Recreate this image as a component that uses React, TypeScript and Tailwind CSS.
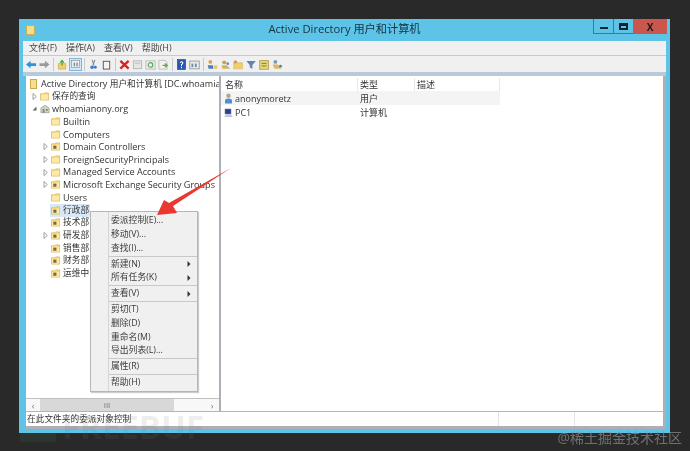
import React from "react";

const font = { fontFamily: '"Open Sans","Noto Sans CJK SC",sans-serif' };

function Folder({ mark }: { mark?: boolean }) {
  return (
    <svg width="10" height="9" viewBox="0 0 11 10" className="shrink-0">
      <path d="M0.5 2 H4 L5 1 H9.5 V9 H0.5 Z" fill="#f3d67e" stroke="#d9b25a" strokeWidth="0.8" />
      <rect x="1" y="3" width="8" height="5.5" fill="#fbe9a8" />
      {mark && <rect x="2.5" y="4" width="3.5" height="3.5" fill="#7d6a35" />}
    </svg>
  );
}

function Chevron({ open }: { open?: boolean }) {
  return (
    <svg width="5" height="7" viewBox="0 0 5 7" className="shrink-0">
      {open ? <path d="M4.5 1.5 V5.5 H0.5 Z" fill="#666" /> : <path d="M1 0.5 L4.3 3.5 L1 6.5 Z" fill="#fff" stroke="#888" strokeWidth="0.8" />}
    </svg>
  );
}

function TreeRow({ label, indent, chevron, open, icon, selected, cjk }: { label: string; indent: number; chevron?: boolean; open?: boolean; icon: React.ReactNode; selected?: boolean; cjk?: boolean }) {
  return (
    <div className="flex h-[12.65px] items-center whitespace-nowrap">
      <div style={{ width: indent }} className="flex shrink-0 justify-end pr-[2px]">
        {chevron && <Chevron open={open} />}
      </div>
      <div className={selected ? "flex h-[13px] items-center gap-[2px] bg-[#d9e8f7] pl-[1px] pr-[1px]" : "flex items-center gap-[2px] pl-[1px]"}>
        {icon}
        <span className={cjk ? "text-[8.7px]" : "text-[9.05px]"}>{label}</span>
      </div>
    </div>
  );
}

function Sep() {
  return <div className="my-[0.5px] ml-[18px] h-px bg-[#c8c8c8]" />;
}

function MenuItem({ label, arrow }: { label: string; arrow?: boolean }) {
  return (
    <div className="flex h-[13.8px] items-center justify-between pl-[20px] pr-[6px]">
      <span>{label}</span>
      {arrow && (
        <svg width="4" height="6" viewBox="0 0 4 6">
          <path d="M0.5 0 L3.5 3 L0.5 6 Z" fill="#333" />
        </svg>
      )}
    </div>
  );
}

function ToolSep() {
  return <div className="mx-[2px] h-[13px] w-px bg-[#c9c9c9]" />;
}

function Tool({ children, w = 15 }: { children: React.ReactNode; w?: number }) {
  return (
    <svg width="13" height="11" viewBox={`0 0 ${w} 12`} className="shrink-0">
      {children}
    </svg>
  );
}

const paperIcon = (
  <Tool w={13}>
    <rect x="2" y="2" width="9" height="8.5" fill="#e6e6e6" stroke="#b5b5b5" />
    <rect x="3.5" y="4" width="6" height="1.5" fill="#c8c8c8" />
  </Tool>
);

export default function App() {
  return (
    <div className="relative h-[451px] w-[690px] overflow-hidden bg-[#292929] pl-[19px] pt-[19px] text-[9px] text-[#333] blur-[0.35px]" style={font}>
      <div className="flex h-[414px] w-[651px] flex-col bg-[#5dc4e8]">
        {/* title bar */}
        <div className="relative flex h-[22px] shrink-0 items-center justify-center">
          <div className="absolute left-[7px] top-[6px] h-[10px] w-[9px] border border-[#c9b060] bg-[#f3e08f]" />
          <span className="mt-[-1px] text-[11.2px] text-[#14303f]">Active Directory 用户和计算机</span>
          <div className="absolute right-[3px] top-0 flex h-[15px]">
            <div className="flex w-[20px] items-center justify-center border-b border-l border-[#2f7f9f]">
              <div className="mt-[3px] h-[2px] w-[8px] bg-[#10242f]" />
            </div>
            <div className="flex w-[20px] items-center justify-center border-b border-l border-[#2f7f9f]">
              <div className="h-[7px] w-[9px] border-2 border-t-[3px] border-[#10242f]" />
            </div>
            <div className="flex w-[34px] items-center justify-center bg-[#c9574f] text-[10px] font-bold leading-none text-[#1b1b1b]">X</div>
          </div>
        </div>

        {/* menu + toolbar */}
        <div className="ml-[4px] mr-[4px] flex h-[15px] shrink-0 items-center gap-[9px] border-b border-[#c9c9c9] bg-[#f0f0f0] pl-[6px] text-[#444]">
          <span>文件(F)</span>
          <span>操作(A)</span>
          <span>查看(V)</span>
          <span>帮助(H)</span>
        </div>
        <div className="ml-[4px] mr-[4px] flex h-[16px] shrink-0 items-center bg-[#f0f0f0] pl-[2px]">
          <Tool w={14}>
            <path d="M1 6 L6 2 V4.5 H12 V7.5 H6 V10 Z" fill="#2b93d8" />
          </Tool>
          <Tool w={13}>
            <path d="M12 6 L7 2 V4.5 H1 V7.5 H7 V10 Z" fill="#9a9a9a" />
          </Tool>
          <ToolSep />
          <Tool w={13}>
            <path d="M2 5 H10 V11 H2 Z" fill="#f0cf6a" stroke="#c9a545" strokeWidth="0.7" />
            <path d="M6 7 V2 M4 4 L6 1.5 L8 4" stroke="#4aa63c" strokeWidth="1.3" fill="none" />
          </Tool>
          <div className="flex h-[13px] w-[13px] items-center justify-center border border-[#7fb4dc] bg-[#d6e6f3]">
            <svg width="9" height="8" viewBox="0 0 10 9">
              <rect x="0.5" y="0.5" width="9" height="8" fill="#eee" stroke="#888" strokeWidth="0.7" />
              <rect x="3" y="3" width="1.5" height="4" fill="#6b8aa5" />
              <rect x="6" y="3" width="1.5" height="4" fill="#6b8aa5" />
            </svg>
          </div>
          <ToolSep />
          <Tool w={13}>
            <path d="M8 1 L6 7 M5 1 L7 7" stroke="#8a8a8a" strokeWidth="1.2" />
            <circle cx="5" cy="9" r="2" fill="#3a7fc0" />
            <circle cx="8.5" cy="9" r="1.6" fill="#3a7fc0" />
          </Tool>
          <Tool w={13}>
            <rect x="3" y="2.5" width="7" height="8.5" fill="#f4f4f4" stroke="#555" />
          </Tool>
          <ToolSep />
          <Tool w={14}>
            <path d="M2.5 2 L11.5 10.5 M11.5 2 L2.5 10.5" stroke="#d8231c" strokeWidth="2.6" />
          </Tool>
          {paperIcon}
          <Tool w={14}>
            <rect x="2" y="2" width="10" height="9" fill="#eee" stroke="#bbb" />
            <circle cx="7" cy="6.5" r="2.5" fill="none" stroke="#57a957" strokeWidth="1.2" />
          </Tool>
          <Tool w={14}>
            <path d="M2 1.5 H9 L11 4 V11 H2 Z" fill="#f2f2f2" stroke="#bbb" />
            <path d="M6 7 H10 M8.5 5 L11 7 L8.5 9" stroke="#5fae3f" strokeWidth="1.4" fill="none" />
          </Tool>
          <ToolSep />
          <Tool w={14}>
            <rect x="2.5" y="0.5" width="9" height="11" fill="#2a55b5" stroke="#1c3b85" strokeWidth="0.6" />
            <path d="M5.5 4 Q7 2 8.5 4 Q8.5 5 7 6 V7.5 M7 8.5 V10" stroke="#fff" strokeWidth="1.1" fill="none" />
          </Tool>
          <Tool w={15}>
            <rect x="2" y="2" width="11" height="9" fill="#e8e8e8" stroke="#999" />
            <rect x="4" y="5" width="2" height="4" fill="#6c8aa5" />
            <rect x="8" y="5" width="2" height="4" fill="#6c8aa5" />
          </Tool>
          <ToolSep />
          <Tool w={15}>
            <circle cx="5" cy="3" r="2.2" fill="#d9a05a" />
            <path d="M2 7 H8 L8.5 11 H3 Z" fill="#4d7fb5" />
            <rect x="9" y="7" width="4" height="4" fill="#e9c768" />
          </Tool>
          <Tool w={15}>
            <circle cx="6" cy="3.5" r="2.2" fill="#c99a5c" />
            <path d="M3 7 H9 L13 11 H4 Z" fill="#d5b35c" />
            <circle cx="10" cy="5" r="1.6" fill="#6f88b5" />
          </Tool>
          <Tool w={15}>
            <path d="M2 3 H6 L7 4 H12 V11 H2 Z" fill="#f1cf6b" stroke="#d3ab4c" strokeWidth="0.6" />
            <circle cx="4" cy="3" r="1.8" fill="#c99a5c" />
          </Tool>
          <Tool w={15}>
            <path d="M1.5 2 H12.5 L8.5 6.5 V11 L5.5 9.5 V6.5 Z" fill="#5f86ad" />
          </Tool>
          <Tool w={15}>
            <rect x="2" y="1.5" width="10" height="10" fill="#eed57a" stroke="#b59b4b" />
            <rect x="4" y="4" width="6" height="1.3" fill="#5a9a5a" />
            <rect x="4" y="7" width="6" height="1.3" fill="#5a9a5a" />
          </Tool>
          <Tool w={15}>
            <circle cx="5" cy="3" r="2.2" fill="#7a99c0" />
            <path d="M2 6 H8 L12 11 H4 Z" fill="#d8b860" />
            <circle cx="11" cy="8" r="1.6" fill="#4f7fb5" />
          </Tool>
        </div>

        {/* strip above the panes */}
        <div className="ml-[4px] mr-[4px] h-[4px] shrink-0 bg-[#b9c9da]" />

        {/* panes and status bar, with a grey edge on the right and below */}
        <div className="ml-[7px] mr-[4px] mb-[4px] flex min-h-0 flex-1 flex-col bg-[#aeaeb6] pb-[3px] pr-[3px]">
          <div className="flex min-h-0 flex-1 gap-[2px]">
            <div className="flex w-[193px] shrink-0 flex-col overflow-hidden bg-white">
              <div className="flex-1 overflow-hidden pt-[1.4px]">
                <div className="flex h-[12.65px] items-center gap-[3px] overflow-hidden whitespace-nowrap pl-[4px]">
                  <div className="h-[10px] w-[7px] shrink-0 border border-[#c9a850] bg-[#f3e08f]" />
                  <span className="ml-px text-[9.05px]">
                    Active Directory <span className="text-[8.7px]">用户和计算机</span> [DC.whoamia
                  </span>
                </div>
                <TreeRow label="保存的查询" cjk indent={13} chevron icon={<Folder />} />
                <TreeRow
                  label="whoamianony.org"
                  indent={13}
                  chevron
                  open
                  icon={
                    <svg width="10" height="10" viewBox="0 0 11 10" className="shrink-0">
                      <path d="M1 9 V4 L5.5 1 L10 4 V9 Z" fill="#d5d5c5" stroke="#8c8c80" strokeWidth="0.7" />
                      <rect x="3" y="5" width="2" height="4" fill="#7a8a7a" />
                      <rect x="6.5" y="5" width="2" height="2" fill="#7a8a7a" />
                    </svg>
                  }
                />
                <TreeRow label="Builtin" indent={24} icon={<Folder />} />
                <TreeRow label="Computers" indent={24} icon={<Folder />} />
                <TreeRow label="Domain Controllers" indent={24} chevron icon={<Folder mark />} />
                <TreeRow label="ForeignSecurityPrincipals" indent={24} chevron icon={<Folder />} />
                <TreeRow label="Managed Service Accounts" indent={24} chevron icon={<Folder />} />
                <TreeRow label="Microsoft Exchange Security Groups" indent={24} chevron icon={<Folder mark />} />
                <TreeRow label="Users" indent={24} icon={<Folder />} />
                <TreeRow label="行政部" cjk indent={24} icon={<Folder mark />} selected />
                <TreeRow label="技术部" cjk indent={24} icon={<Folder mark />} />
                <TreeRow label="研发部" cjk indent={24} chevron icon={<Folder mark />} />
                <TreeRow label="销售部" cjk indent={24} icon={<Folder mark />} />
                <TreeRow label="财务部" cjk indent={24} icon={<Folder mark />} />
                <TreeRow label="运维中" cjk indent={24} icon={<Folder mark />} />
              </div>
              {/* horizontal scrollbar */}
              <div className="flex h-[13px] shrink-0 items-center border-t border-[#c0c0c0] bg-[#f8f8f8] text-[#777]">
                <div className="flex w-[14px] justify-center text-[9px] leading-none">‹</div>
                <div className="flex h-full w-[134px] items-center justify-center bg-[#d8d8d8] text-[8px] leading-none">III</div>
                <div className="flex-1" />
                <div className="flex w-[14px] justify-center text-[9px] leading-none">›</div>
              </div>
            </div>

            <div className="flex flex-1 flex-col bg-white">
              <div className="flex h-[15px] shrink-0 pt-[2px]">
                <div className="flex w-[137px] items-center border-r border-[#e8e8e8] pl-[4px]">名称</div>
                <div className="flex w-[57px] items-center border-r border-[#e8e8e8] pl-[2px]">类型</div>
                <div className="flex w-[85px] items-center border-r border-[#e8e8e8] pl-[2px]">描述</div>
              </div>
              <div className="flex h-[14px] w-[279px] items-center bg-[#f4f4f4] pt-[1px]">
                <div className="flex w-[137px] items-center gap-[2px] pl-[3px]">
                  <svg width="9" height="11" viewBox="0 0 9 11" className="shrink-0">
                    <circle cx="4.5" cy="2.8" r="2.2" fill="#b9a48a" />
                    <path d="M1 10.5 V7.5 Q1 5.5 4.5 5.5 Q8 5.5 8 7.5 V10.5 Z" fill="#4d8fd0" />
                  </svg>
                  <span>anonymoretz</span>
                </div>
                <span className="pl-[2px]">用户</span>
              </div>
              <div className="flex h-[14px] items-center pt-[1px]">
                <div className="flex w-[137px] items-center gap-[2px] pl-[3px]">
                  <svg width="9" height="10" viewBox="0 0 9 10" className="shrink-0">
                    <rect x="1" y="1" width="6" height="5" fill="#2b3f99" stroke="#778" strokeWidth="0.5" />
                    <path d="M0 9 L2 6.5 H7 L9 9 Z" fill="#c0c4d8" />
                  </svg>
                  <span>PC1</span>
                </div>
                <span className="pl-[2px]">计算机</span>
              </div>
            </div>
          </div>

          {/* status bar */}
          <div className="flex h-[15px] shrink-0 border-t border-[#b5b5b5] bg-white text-[8.7px] text-[#333]">
            <div className="flex w-[473px] items-center border-r border-[#e4e4e4] pl-[1px] pt-[1px]">在此文件夹的委派对象控制</div>
            <div className="w-[76px] border-r border-[#e4e4e4]" />
          </div>
        </div>
      </div>

      {/* context menu */}
      <div className="absolute left-[90px] top-[211px] h-[181px] w-[108px] border border-[#b5b5b5] bg-[#f0f0f0] pt-[2px] text-[8.8px] text-[#3a3a3a] shadow-[1px_1px_1px_rgba(0,0,0,0.2)]">
        <div className="absolute bottom-0 left-[17px] top-0 w-px bg-[#d5d5d5]" />
        <MenuItem label="委派控制(E)..." />
        <MenuItem label="移动(V)..." />
        <MenuItem label="查找(I)..." />
        <Sep />
        <MenuItem label="新建(N)" arrow />
        <MenuItem label="所有任务(K)" arrow />
        <Sep />
        <MenuItem label="查看(V)" arrow />
        <Sep />
        <MenuItem label="剪切(T)" />
        <MenuItem label="删除(D)" />
        <MenuItem label="重命名(M)" />
        <MenuItem label="导出列表(L)..." />
        <Sep />
        <MenuItem label="属性(R)" />
        <Sep />
        <MenuItem label="帮助(H)" />
      </div>

      {/* red arrow annotation */}
      <svg className="absolute left-[150px] top-[160px]" width="90" height="60" viewBox="0 0 90 60">
        <path d="M81 8 L23 46 L27 53 L7 55 L14 40 L19 43 Z" fill="#e8382f" />
      </svg>

      {/* watermarks */}
      <div className="absolute left-[20px] top-[433px] h-[9px] w-[36px] bg-[#3f6b4a] opacity-20" />
      <div className="absolute left-[62px] top-[410px] text-[33px] font-bold leading-none text-[#777] opacity-[0.12]">FREEBUF</div>
      <div className="absolute right-[8px] top-[431px] text-[14px] leading-none text-[#8f8f8f] opacity-70">@稀土掘金技术社区</div>
    </div>
  );
}
